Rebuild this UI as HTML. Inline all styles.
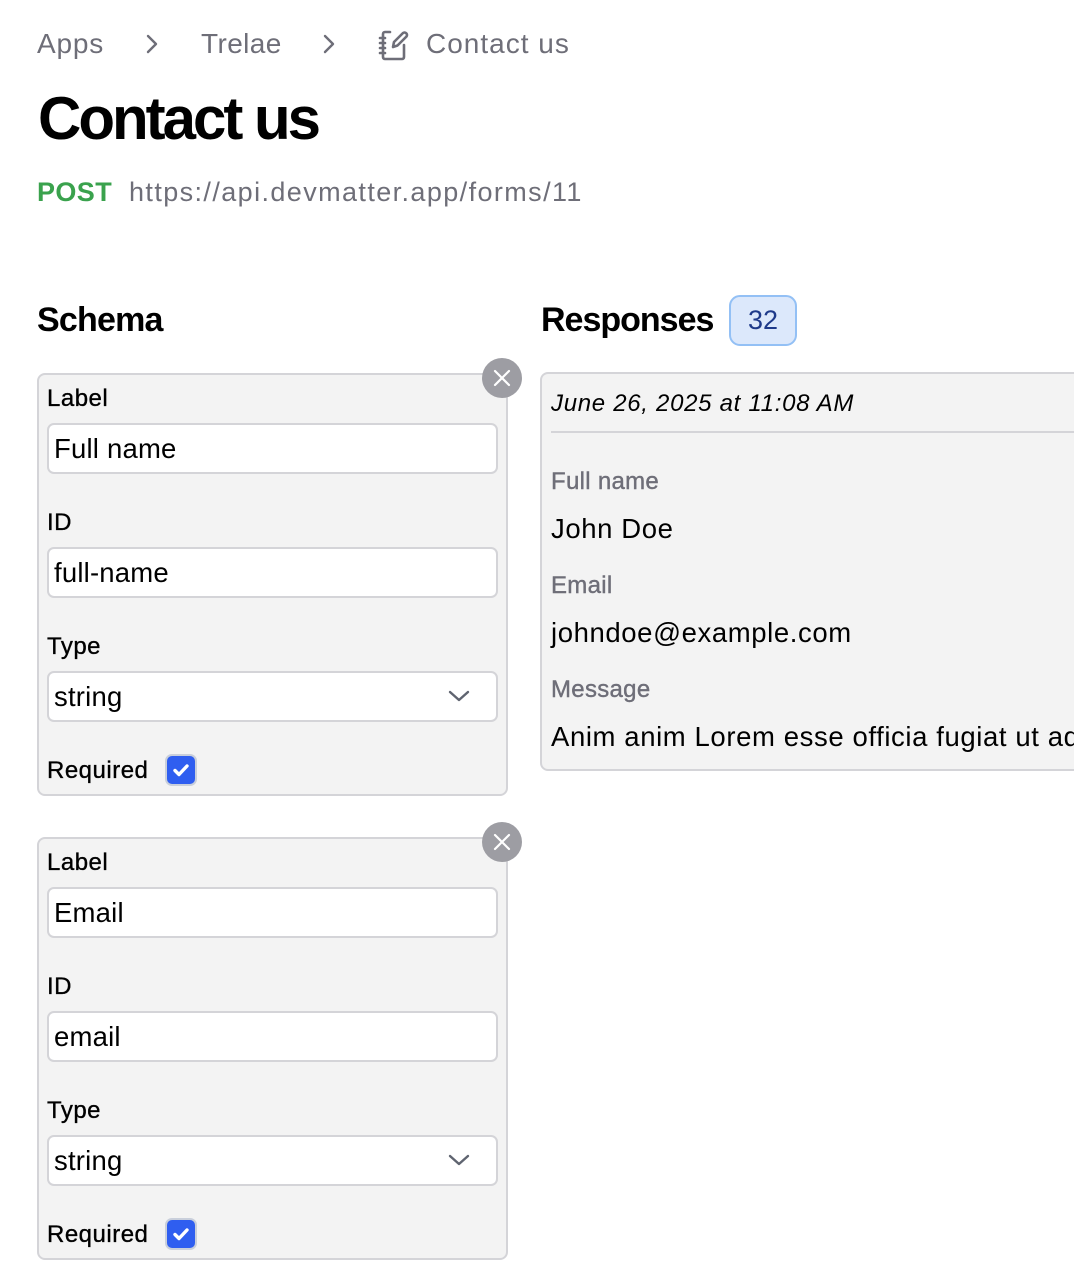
<!DOCTYPE html>
<html><head><meta charset="utf-8"><style>
*{box-sizing:border-box;margin:0;padding:0}
body{width:1074px;height:1282px;overflow:hidden;background:#fff;font-family:"Liberation Sans",sans-serif;position:relative;color:#000}
.a{position:absolute;white-space:nowrap}
.gray{color:#6e6e78}
.card{position:absolute;left:37px;width:471px;height:423px;background:#f3f3f3;border:2px solid #d4d4d8;border-radius:8px}
.close{position:absolute;width:40px;height:40px;border-radius:50%;background:#9d9da3}
.lbl{font-size:24px;-webkit-text-stroke:0.35px #000;line-height:30px;letter-spacing:0.5px}
.inp{position:absolute;left:47px;width:451px;height:51px;background:#fff;border:2px solid #d4d4d8;border-radius:7px;font-size:27.5px;line-height:47px;padding-left:5px;letter-spacing:0.2px}
.cb{position:absolute;left:165px;width:32px;height:32px;border-radius:7px;background:#2f5ef0;border:2px solid #c9cfdb}
.rl{font-size:24px;color:#6e6e78;-webkit-text-stroke:0.4px #6e6e78;line-height:30px;letter-spacing:0.3px}
.rv{font-size:27.5px;line-height:34px;letter-spacing:0.6px}
</style></head><body>

<div class="a gray" style="left:37px;top:28px;font-size:28px;line-height:32px;letter-spacing:0.8px">Apps</div>
<svg class="a" style="left:143px;top:33px" width="18" height="22" viewBox="0 0 18 22"><path d="M5 3l8 8-8 8" fill="none" stroke="#6e6e78" stroke-width="2.4" stroke-linecap="round" stroke-linejoin="round"/></svg>
<div class="a gray" style="left:201px;top:28px;font-size:28px;line-height:32px;letter-spacing:0.4px">Trelae</div>
<svg class="a" style="left:320px;top:33px" width="18" height="22" viewBox="0 0 18 22"><path d="M5 3l8 8-8 8" fill="none" stroke="#6e6e78" stroke-width="2.4" stroke-linecap="round" stroke-linejoin="round"/></svg>
<svg class="a" style="left:376px;top:28px" width="34" height="34" viewBox="0 0 34 34" fill="none" stroke="#6e6e78" stroke-width="2.6" stroke-linecap="round" stroke-linejoin="round">
<path d="M14 4H9a2 2 0 0 0-2 2v23a2 2 0 0 0 2 2h17a2 2 0 0 0 2-2V17"/>
<path d="M4 10h5M4 15h5M4 20h5M4 25h5"/>
<path d="M17 19l1-5 9-9a2.5 2.5 0 0 1 3.5 3.5l-9 9z"/>
</svg>
<div class="a gray" style="left:426px;top:28px;font-size:28px;line-height:32px;letter-spacing:1px">Contact us</div>

<div class="a" style="left:38px;top:84px;font-size:60px;font-weight:bold;letter-spacing:-3px;line-height:70px">Contact us</div>

<div class="a" style="left:37px;top:177px;font-size:27px;font-weight:bold;color:#3aa24d;line-height:31px;letter-spacing:0.4px">POST</div>
<div class="a gray" style="left:129px;top:177px;font-size:27px;line-height:31px;letter-spacing:1.4px">https://api.devmatter.app/forms/11</div>

<div class="a" style="left:37px;top:300px;font-size:34px;font-weight:bold;letter-spacing:-0.8px;line-height:40px">Schema</div>
<div class="a" style="left:541px;top:300px;font-size:34px;font-weight:bold;letter-spacing:-1px;line-height:40px">Responses</div>
<div class="a" style="left:729px;top:295px;width:68px;height:51px;background:#dce8fb;border:2px solid #93c0f5;border-radius:11px;color:#1e3a8a;font-size:27px;line-height:47px;text-align:center">32</div>

<!-- card 1 -->
<div class="card" style="top:373px"></div>
<div class="close" style="left:482px;top:358px"></div>
<svg class="a" style="left:492px;top:368px" width="20" height="20" viewBox="0 0 20 20"><path d="M3 3l14 14M17 3L3 17" stroke="#fff" stroke-width="2.2" stroke-linecap="round"/></svg>
<div class="a lbl" style="left:47px;top:384px">Label</div>
<div class="inp" style="top:423px">Full name</div>
<div class="a lbl" style="left:47px;top:508px">ID</div>
<div class="inp" style="top:547px">full-name</div>
<div class="a lbl" style="left:47px;top:632px">Type</div>
<div class="inp" style="top:671px">string</div>
<svg class="a" style="left:447px;top:686px" width="24" height="20" viewBox="0 0 24 20"><path d="M3 6l9 8 9-8" fill="none" stroke="#5f6470" stroke-width="2.4" stroke-linecap="round" stroke-linejoin="round"/></svg>
<div class="a lbl" style="left:47px;top:756px">Required</div>
<div class="cb" style="top:754px"></div>
<svg class="a" style="left:169px;top:758px" width="24" height="24" viewBox="0 0 24 24"><path d="M6 12.5l4 4 8-8.5" fill="none" stroke="#fff" stroke-width="3.4" stroke-linecap="round" stroke-linejoin="round"/></svg>

<!-- card 2 -->
<div class="card" style="top:837px"></div>
<div class="close" style="left:482px;top:822px"></div>
<svg class="a" style="left:492px;top:832px" width="20" height="20" viewBox="0 0 20 20"><path d="M3 3l14 14M17 3L3 17" stroke="#fff" stroke-width="2.2" stroke-linecap="round"/></svg>
<div class="a lbl" style="left:47px;top:848px">Label</div>
<div class="inp" style="top:887px">Email</div>
<div class="a lbl" style="left:47px;top:972px">ID</div>
<div class="inp" style="top:1011px">email</div>
<div class="a lbl" style="left:47px;top:1096px">Type</div>
<div class="inp" style="top:1135px">string</div>
<svg class="a" style="left:447px;top:1150px" width="24" height="20" viewBox="0 0 24 20"><path d="M3 6l9 8 9-8" fill="none" stroke="#5f6470" stroke-width="2.4" stroke-linecap="round" stroke-linejoin="round"/></svg>
<div class="a lbl" style="left:47px;top:1220px">Required</div>
<div class="cb" style="top:1218px"></div>
<svg class="a" style="left:169px;top:1222px" width="24" height="24" viewBox="0 0 24 24"><path d="M6 12.5l4 4 8-8.5" fill="none" stroke="#fff" stroke-width="3.4" stroke-linecap="round" stroke-linejoin="round"/></svg>

<!-- response card -->
<div class="a" style="left:540px;top:372px;width:600px;height:399px;background:#f3f3f3;border:2px solid #d4d4d8;border-radius:8px"></div>
<div class="a" style="left:551px;top:390px;font-size:24px;font-style:italic;line-height:28px;letter-spacing:0.7px">June 26, 2025 at 11:08 AM</div>
<div class="a" style="left:551px;top:431px;width:540px;height:2px;background:#d4d4d8"></div>
<div class="a rl" style="left:551px;top:467px">Full name</div>
<div class="a rv" style="left:551px;top:512px">John Doe</div>
<div class="a rl" style="left:551px;top:571px">Email</div>
<div class="a rv" style="left:551px;top:616px">johndoe@example.com</div>
<div class="a rl" style="left:551px;top:675px">Message</div>
<div class="a rv" style="left:551px;top:720px">Anim anim Lorem esse officia fugiat ut ad</div>

</body></html>
